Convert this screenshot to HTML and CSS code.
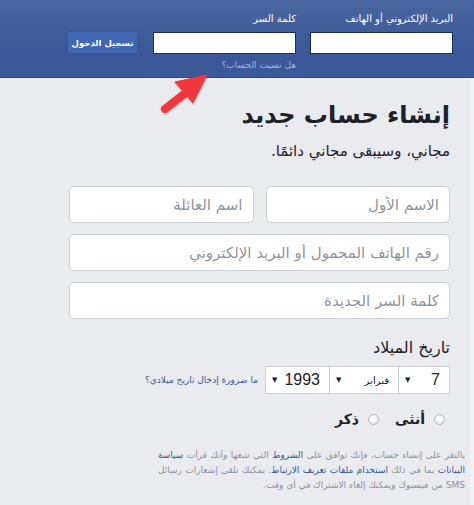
FILE: index.html
```html
<!DOCTYPE html>
<html lang="ar" dir="rtl">
<head>
<meta charset="utf-8">
<title>فيسبوك - تسجيل الدخول أو الاشتراك</title>
<link rel="stylesheet" href="styles.css">
</head>
<body>
<header class="topbar">
  <div class="login">
    <div class="field">
      <label class="field-label">البريد الإلكتروني أو الهاتف</label>
      <input class="field-input" type="text">
    </div>
    <div class="field">
      <label class="field-label">كلمة السر</label>
      <input class="field-input" type="password">
      <a class="forgot" href="#">هل نسيت الحساب؟</a>
    </div>
    <div class="field field-btn">
      <button class="login-btn" type="button">تسجيل الدخول</button>
    </div>
  </div>
</header>

<svg class="pointer" width="70" height="50" viewBox="155 68 70 50" aria-hidden="true">
  <defs>
    <filter id="sh" x="-20%" y="-20%" width="140%" height="140%">
      <feDropShadow dx="0" dy="1" stdDeviation="1" flood-color="#000" flood-opacity="0.25"/>
    </filter>
  </defs>
  <g filter="url(#sh)" fill="#f2393e" stroke="#f2393e">
    <line x1="165" y1="109" x2="188" y2="91" stroke-width="8" stroke-linecap="round"/>
    <polygon points="207,75 175,82 193,103" stroke-width="1" stroke-linejoin="round"/>
  </g>
</svg>

<main class="page">
  <section class="signup">
    <h1 class="title">إنشاء حساب جديد</h1>
    <p class="subtitle">مجاني، وسيبقى مجاني دائمًا.</p>

    <div class="fields">
      <div class="row">
        <input class="box" type="text" placeholder="الاسم الأول">
        <input class="box" type="text" placeholder="اسم العائلة">
      </div>
      <div class="row">
        <input class="box" type="text" placeholder="رقم الهاتف المحمول أو البريد الإلكتروني">
      </div>
      <div class="row">
        <input class="box" type="password" placeholder="كلمة السر الجديدة">
      </div>
    </div>

    <div class="bday-label">تاريخ الميلاد</div>
    <div class="bday">
      <div class="selects">
        <div class="sel sel-day"><span class="sel-val">7</span><span class="caret">▼</span></div>
        <div class="sel sel-month"><span class="sel-val sel-small">فبراير</span><span class="caret">▼</span></div>
        <div class="sel sel-year"><span class="sel-val">1993</span><span class="caret">▼</span></div>
      </div>
      <a class="why" href="#">ما ضرورة إدخال تاريخ ميلادي؟</a>
    </div>

    <div class="gender">
      <label class="opt"><span class="radio"></span><span class="opt-text">أنثى</span></label>
      <label class="opt"><span class="radio"></span><span class="opt-text">ذكر</span></label>
    </div>
  </section>

  <p class="terms">
    <span class="line">بالنقر على إنشاء حساب، فإنك توافق على <a href="#">الشروط</a> التي نتبعها وأنك قرأت <a href="#">سياسة</a></span>
    <span class="line"><a href="#">البيانات</a> بما في ذلك <a href="#">استخدام ملفات تعريف الارتباط</a>. يمكنك تلقي إشعارات رسائل</span>
    <span class="line last">SMS من فيسبوك ويمكنك إلغاء الاشتراك في أي وقت.</span>
  </p>
</main>
</body>
</html>
```
FILE: styles.css
```css
* { box-sizing: border-box; }

html, body {
  margin: 0;
  padding: 0;
}

body {
  width: 474px;
  height: 505px;
  overflow: hidden;
  background: #e9ebee;
  font-family: "DejaVu Sans", "Liberation Sans", Arial, sans-serif;
  color: #1d2129;
  direction: rtl;
  position: relative;
}

a { text-decoration: none; }

/* ---------- top bar ---------- */
.topbar {
  height: 78px;
  background: linear-gradient(#4b66a1, #3b5998 60%);
  border-bottom: 1px solid #29487d;
}

.login {
  display: flex;
  padding: 12px 21px 0 0;
  gap: 14px;
}

.field {
  display: flex;
  flex-direction: column;
  width: 143px;
}

.field-label {
  color: #fff;
  font-size: 10px;
  height: 20px;
  line-height: 14px;
}

.field-input {
  width: 143px;
  height: 22px;
  border: 1px solid #1d2a5b;
  background: #fff;
  margin: 0;
  padding: 0 3px;
}

.forgot {
  color: #9cb4d8;
  font-size: 9px;
  margin-top: 6px;
}

.field-btn {
  width: auto;
  padding-top: 19px;
  margin-right: 1px;
}

.login-btn {
  width: 71px;
  height: 23px;
  background: #4267b2;
  border: 1px solid #365899;
  color: #fff;
  font-family: inherit;
  font-weight: bold;
  font-size: 8.5px;
  padding: 0;
  cursor: pointer;
}

/* ---------- arrow overlay ---------- */
.pointer {
  position: absolute;
  left: 155px;
  top: 68px;
}

/* ---------- signup ---------- */
.page {
  padding: 0 5px 0 0;
  height: 427px;
  border-right: 4px solid #f1f2f4;
}

.signup {
  width: 381px;
  margin-right: 15px;
}

.title {
  margin: 0;
  padding-top: 21px;
  font-size: 24px;
  line-height: 32px;
  font-weight: bold;
  color: #1d2129;
}

.subtitle {
  margin: 10px 0 0;
  font-size: 15px;
  line-height: 20px;
  color: #1d2129;
}

.fields {
  display: flex;
  flex-direction: column;
  gap: 11px;
  margin-top: 25px;
}

.row {
  display: flex;
  gap: 12px;
}

.box {
  flex: 1;
  min-width: 0;
  height: 37px;
  margin: 0;
  border: 1px solid #ccd0d5;
  border-radius: 5px;
  background: #fff;
  padding: 0 10px;
  font-family: inherit;
  font-size: 15px;
  color: #1d2129;
  direction: rtl;
}

.box::placeholder { color: #90949c; }

.bday-label {
  margin-top: 19px;
  font-size: 16px;
  line-height: 20px;
  color: #1d2129;
}

.bday {
  display: flex;
  align-items: center;
  gap: 8px;
  margin-top: 8px;
}

.selects {
  display: flex;
}

.sel {
  height: 28px;
  background: #fff;
  border: 1px solid #ccd0d5;
  display: flex;
  align-items: center;
  justify-content: space-between;
  padding: 0 9px 0 6px;
  margin-left: -1px;
}

.sel-day { width: 52px; }
.sel-month { width: 70px; }
.sel-year { width: 65px; }

.sel-val {
  font-family: "Liberation Sans", Arial, sans-serif;
  font-size: 16px;
  color: #1d2129;
}

.sel-small {
  font-family: "DejaVu Sans", sans-serif;
  font-size: 10px;
}

.caret {
  font-size: 7px;
  color: #1d2129;
}

.why {
  color: #365899;
  font-size: 9px;
}

.gender {
  display: flex;
  gap: 16px;
  margin-top: 15px;
  padding-right: 5px;
}

.opt {
  display: flex;
  align-items: center;
  gap: 9px;
}

.radio {
  width: 11px;
  height: 11px;
  border-radius: 50%;
  border: 1px solid #b4b8bd;
  background: radial-gradient(circle at 50% 40%, #fff, #e2e4e7);
}

.opt-text {
  font-size: 14px;
  font-weight: bold;
  line-height: 20px;
  color: #1d2129;
}

.terms {
  width: 307px;
  margin: 19px 0 0;
  font-size: 9px;
  line-height: 15px;
  color: #90949c;
}

.terms .line {
  display: block;
  text-align: justify;
  text-align-last: justify;
  white-space: nowrap;
}

.terms .line.last {
  text-align-last: right;
}

.terms a { color: #365899; }
```
